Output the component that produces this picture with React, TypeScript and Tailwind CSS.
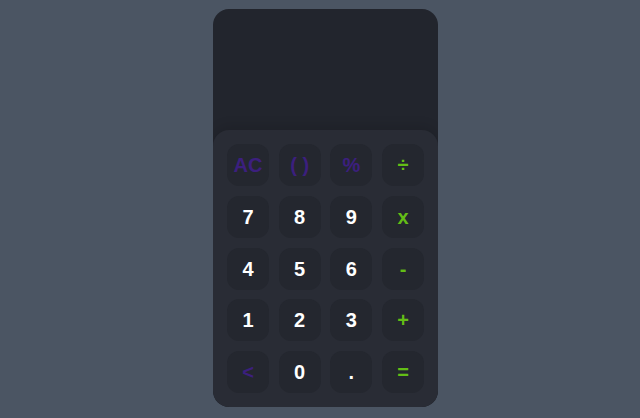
import React from "react";

type K = { label: string; kind: "fn" | "num" | "op" };

const keys: K[] = [
  { label: "AC", kind: "fn" },
  { label: "( )", kind: "fn" },
  { label: "%", kind: "fn" },
  { label: "÷", kind: "op" },
  { label: "7", kind: "num" },
  { label: "8", kind: "num" },
  { label: "9", kind: "num" },
  { label: "x", kind: "op" },
  { label: "4", kind: "num" },
  { label: "5", kind: "num" },
  { label: "6", kind: "num" },
  { label: "-", kind: "op" },
  { label: "1", kind: "num" },
  { label: "2", kind: "num" },
  { label: "3", kind: "num" },
  { label: "+", kind: "op" },
  { label: "<", kind: "fn" },
  { label: "0", kind: "num" },
  { label: ".", kind: "num" },
  { label: "=", kind: "op" },
];

export default function App() {
  return (
    <div
      className="w-[640px] h-[418px] bg-[#4b5563] pt-[9px] pl-[213px]"
      style={{ fontFamily: '"Liberation Sans", Arial, sans-serif' }}
    >
      <div className="w-[225px] h-[398px] bg-[#22252d] rounded-[16px] flex flex-col overflow-hidden">
        <div className="h-[121px] shrink-0" />
        <div className="flex-1 bg-[#292c35] rounded-[16px] shadow-[0_-4px_12px_rgba(0,0,0,0.12)] px-[14px] pt-[14px] pb-[14px] grid grid-cols-[repeat(4,42px)] grid-rows-[repeat(5,42px)] justify-between content-between">
          {keys.map((k, i) => (
            <div
              key={i}
              className={
                "w-[42px] h-[42px] rounded-[12px] bg-[#24272f] flex items-center justify-center text-[20px] font-bold " +
                (k.kind === "num"
                  ? "text-white"
                  : k.kind === "fn"
                  ? "text-[#3c1f7e]"
                  : "text-[#63bd16]")
              }
            >
              {k.label}
            </div>
          ))}
        </div>
      </div>
    </div>
  );
}
